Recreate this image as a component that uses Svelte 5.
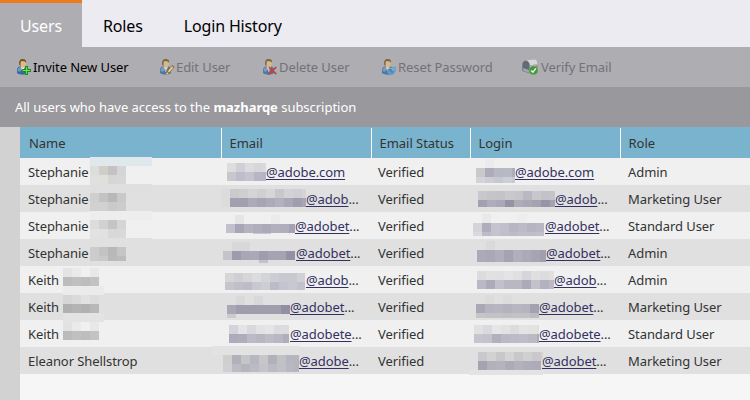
<script>
  const tabs = ['Users', 'Roles', 'Login History'];
  const actions = [
    { label: 'Invite New User', icon: 'add', w: 143 },
    { label: 'Edit User', icon: 'edit', w: 103 },
    { label: 'Delete User', icon: 'delete', w: 119 },
    { label: 'Reset Password', icon: 'reset', w: 142 },
    { label: 'Verify Email', icon: 'mail', w: 100 }
  ];
  const columns = ['Name', 'Email', 'Email Status', 'Login', 'Role'];

  // Mask band: [x, y, height, total width, colours of the 9px tiles]; "-" leaves a tile clear.
  // x and y count from the top left corner of the cell that holds the mask.
  const rows = [
    {
      name: 'Stephanie', status: 'Verified', role: 'Admin',
      nameMask: [[70, -1, 9, 62, 'e1e8eb e1e8eb e1e8eb e1e8eb e1e8eb e1e8eb e1e8eb'], [70, 8, 9, 36, 'dddddc cfcec7 c6c2c4 d4d5d7'], [70, 17, 9, 36, 'e0e0e0 dfdfdb d8d5d5 d6d7da']],
      email: { at: 45, text: '@adobe.com', mask: [[6, 5, 9, 39, 'dddddd cfcfd5 dcdcdf d7d7d9 dadadf'], [6, 14, 9, 39, 'c8c8cc bebdcb c4c4cc b8b6c4 b5b3c4']] },
      login: { at: 45, text: '@adobe.com', mask: [[15, 1, 9, 9, 'ebebeb'], [6, 10, 9, 39, 'c8c8cd acacba b8b8c3 b6bac5 adacbb'], [6, 19, 6, 39, 'd3d3d8 cdcdd5 c8c8d2 ccd0d6 c8c8d3']] }
    },
    {
      name: 'Stephanie', status: 'Verified', role: 'Marketing User',
      nameMask: [[70, -1, 9, 62, 'dfdfdf dfdfdf dfdfdf dfdfdf dfdfdf dfdfdf dfdfdf'], [70, 8, 9, 36, 'cfcfcf c3c3c3 b8b8b8 c9c9c9'], [70, 17, 9, 36, 'd1d1d1 d1d1d1 cacaca cccccc']],
      email: { at: 85, text: '@adob', mask: [[0, 4, 18, 9, 'dcdcdc'], [9, 4, 9, 76, 'cacacd ceced1 d4d4d5 cfcfd2 d6d6d7 c8c8cc d3d3d5 d0d0d2 d4d4d6'], [9, 13, 9, 76, 'a2a0b0 a2a0b0 acaab8 a7a5b3 acabb9 b3b1bd aaa8b6 9f9db0 a7a5b6']] },
      login: { at: 85, text: '@adob', mask: [[8, 6, 9, 77, 'c8c8cc c4c4c9 c3c3c8 c9c9cd c5c5ca b9b9c4 c8c8cc c2c2c8 c4c4ca'], [8, 15, 7, 77, 'a2a0b1 aeadba a9a8b6 9593a5 adacb9 a9a7b5 a5a3b2 9694a6 a4a2b2']] }
    },
    {
      name: 'Stephanie', status: 'Verified', role: 'Standard User',
      nameMask: [[70, -1, 9, 62, 'ededed ededed ededed ededed ededed ededed ededed'], [70, 8, 9, 36, 'dcdcdc d1d1d1 c4c4c4 d5d5d5'], [70, 17, 9, 36, 'e2e2e2 e1e1e1 d8d8d8 d9d9d9']],
      email: { at: 74, text: '@adobet', mask: [[14, 3, 9, 9, 'e5e5e8'], [50, 3, 9, 9, 'ebebec'], [5, 12, 9, 69, 'c1c0cc a8a6b6 b5b3c0 b0aebc abaab8 b2b0bd b0aebd a4a2b3'], [32, 21, 1, 18, 'c9c8d0 c9c8d0']] },
      login: { at: 75, text: '@adobet', mask: [[12, 2, 9, 9, 'e9e9ea'], [48, 2, 9, 9, 'ededee'], [3, 11, 9, 71, 'd4d4da b0aebd c5c4ce c0bfca b8b6c4 bbbac6 b5b4c1 b8b7c3'], [3, 20, 4, 71, 'd9d9de bdbbc9 c4c3ce c0becb bdbbc8 c0becb bebdc9 c0bfca']] }
    },
    {
      name: 'Stephanie', status: 'Verified', role: 'Admin',
      nameMask: [[70, -1, 9, 62, 'e0e0e0 e0e0e0 e0e0e0 e0e0e0 e0e0e0 e0e0e0 e0e0e0'], [70, 8, 9, 36, 'cccccc c3c3c3 b8b8b8 c5c5c5'], [70, 17, 5, 36, 'cccccc c9c9c9 b9b9b9 bcbcbc']],
      email: { at: 75, text: '@adobet', mask: [[11, 3, 9, 18, 'd8d8d9 d8d8d9'], [2, 12, 9, 72, 'c5c4cc 9e9bad a9a7b6 aba9b7 9f9cae a6a4b3 a5a3b1 9491a4'], [38, 21, 3, 9, 'c2c2c9']] },
      login: { at: 76, text: '@adobet', mask: [[16, 2, 9, 9, 'dadadb'], [7, 11, 12, 69, 'acaab8 aaa8b6 b0aebb a5a3b3 b0afbb abaab7 a7a5b4 a19fae']] }
    },
    {
      name: 'Keith', status: 'Verified', role: 'Admin',
      nameMask: [[43, 2, 9, 36, 'e4e4e4 eaeaea f0f0f0 e8e8e8'], [43, 11, 9, 36, 'bcbcbc c0c0c0 bdbdbd c2c2c2'], [43, 20, 9, 41, 'ebebeb ebebeb ebebeb ebebeb ebebeb']],
      email: { at: 85, text: '@adob', mask: [[4, 7, 9, 80, 'd6d6d9 d0d0d4 d6d6da dcdcdf d4d4d9 cdcdd5 c8c8d1 c8c8d1 d0d0d5'], [4, 16, 8, 80, 'c5c5cc c0c0cb bdbdca c8c8d0 cdcdd4 bcbcc9 c4c4ce c8c8d0 c2c2cc']] },
      login: { at: 84, text: '@adob', mask: [[7, 5, 9, 77, 'dcdcdf e1e1e2 e0e0e2 e4e4e6 e0e0e1 d5d5db dfdfe2 dcdcdf e0e0e1'], [7, 14, 9, 77, 'b9b8c5 adabba c2c1cb b8b7c3 b8b7c3 acaab9 c3c2cc b4b2c0 bab9c4']] }
    },
    {
      name: 'Keith', status: 'Verified', role: 'Marketing User',
      nameMask: [[43, 2, 9, 36, 'd6d6d6 dadada e1e1e1 dcdcdc'], [43, 11, 9, 36, 'b0b0b0 b4b4b4 b1b1b1 b8b8b8'], [43, 20, 9, 41, 'e3e3e3 e3e3e3 e3e3e3 e3e3e3 e3e3e3']],
      email: { at: 69, text: '@adobet', mask: [[15, 3, 9, 27, 'd9d9dc - d8d8da'], [6, 12, 9, 63, 'a9a8b5 a09ead a09ead a09ead a09ead a09ead 938fa3'], [6, 21, 4, 9, 'cbcbcd']] },
      login: { at: 69, text: '@adobet', mask: [[15, 2, 9, 27, 'dcdcdc - dcdcdc'], [6, 11, 9, 63, 'a9a8b7 b5b4bf b8b7c1 b3b2bd b8b7c1 b5b4bf a4a2b1'], [6, 20, 5, 63, 'c5c5c9 c1c1c6 c3c3c7 bfbfc5 c3c3c7 c1c1c6 bcbbc3']] }
    },
    {
      name: 'Keith', status: 'Verified', role: 'Standard User',
      nameMask: [[43, 2, 9, 36, 'e2e2e2 eaeaea f0f0f0 e8e8e8'], [43, 11, 9, 36, 'bbbbbb c0c0c0 bdbdbd c3c3c3']],
      email: { at: 69, text: '@adobete', mask: [[8, 5, 9, 60, 'd3d3da e4e4e6 d9d9dd e2e2e4 e5e5e7 dcdcdf dcdce0'], [8, 14, 9, 60, 'adabbb afadbd bbbac6 b7b6c2 bdbcc7 b8b7c3 b0aebd']] },
      login: { at: 69, text: '@adobete', mask: [[4, 5, 9, 65, 'e1e1e2 dadade e6e6e7 e2e2e3 dcdcdf e4e4e5 e2e2e3 e0e0e1'], [4, 14, 9, 65, 'c5c5d0 c3c2cd b1b0bf bab9c6 bcbbc7 bebdc9 babac5 aeacbc']] }
    },
    {
      name: 'Eleanor Shellstrop', status: 'Verified', role: 'Marketing User',
      nameMask: [],
      email: { at: 78, text: '@adobe', mask: [[-8, -1, 9, 86, 'e2e2e2 e2e2e2 e2e2e2 e2e2e2 e2e2e2 e2e2e2 e2e2e2 e2e2e2 e2e2e2 e2e2e2'], [2, 8, 9, 76, 'cfcfcf b1b1bc c5c5c9 b7b7c2 c7c7ca b1b1bc c1c1c6 b6b6c0 b5b5be'], [2, 17, 8, 76, 'd0d0d2 bcbcc5 b5b5bf bbbbc3 c3c3c9 bbbbc5 c0c0c7 b8b8c1 b4b4bd']] },
      login: { at: 72, text: '@adobet', mask: [[8, 5, 9, 65, 'c9c9cc d2d2d3 c8c8cb d4d4d5 c8c8cb d0d0d1 c9c9cb d2d2d3'], [8, 14, 9, 63, 'a5a3b1 b1b0bb b5b4be adabb8 b2b1bc afadb9 adabb8'], [-1, 23, 5, 74, 'e3e3e3 e3e3e3 e3e3e3 e3e3e3 e3e3e3 e3e3e3 e3e3e3 e3e3e3 e3e3e3']] }
    }
  ];
</script>

{#snippet mosaic(bands)}
  <svg class="mask" width="1" height="1" shape-rendering="crispEdges" aria-hidden="true">
    {#each bands as [x, y, h, w, tiles]}
      {#each tiles.split(' ') as c, i}
        {#if c !== '-'}
          <rect x={x + i * 9} {y} width={Math.min(9, w - i * 9)} height={h} fill={'#' + c} />
        {/if}
      {/each}
    {/each}
  </svg>
{/snippet}

{#snippet address(a)}
  <div class="cell">
    <span class="addr" style:padding-left="{a.at}px"><a href="#user">{a.text}</a>{#if a.text !== '@adobe.com'}...{/if}</span>
    {@render mosaic(a.mask)}
  </div>
{/snippet}

{#snippet icon(kind)}
  <svg class="icon" class:wide={kind === 'mail'} width="16" height="16" viewBox="0 0 16 16" aria-hidden="true">
    {#if kind === 'mail'}
      <path d="M.2 5.500C.2 2.500 2.500 1 4.500 1h8.500c2 0 2.800 1.500 2.800 4v6L7 14.500.2 12z" fill="#92979c" />
      <path d="M4 1.300 13 .6c2 .2 2.500 2 2.500 4.400L8 6.500C7.800 3.500 6.500 1.800 4 1.300z" fill="#d5d8da" />
      <path d="M.5 5.500C.5 3 2 2 3.800 2s3.700 1.700 3.700 4.500v7.600L.5 12z" fill="#626b73" />
      <path d="M1.200 9 7 11v2.800L1.200 12z" fill="#9aa7b1" />
      <path d="M7.700 6.700 15.600 5v4l-7.900 4z" fill="#b5babe" />
      <path d="M13.500 6.500h2v2h-2z" fill="#d65f60" />
      <circle cx="11.500" cy="11.300" r="4.400" fill="#439840" stroke="#72ad6b" stroke-width=".7" />
      <path d="m9.200 11.400 1.700 1.700 3-3.700" fill="none" stroke="#f0f6ef" stroke-width="1.400" />
    {:else}
      <g opacity={kind === 'add' ? 1 : 0.8}>
        <path d="M1 14.300V11c0-2.300 1.700-3.700 4-4h3c2.300.3 4 1.700 4 4v3.300c-3 1.800-8 1.800-11 0z" fill="#386b9b" />
        <path d="M1.500 11.200C2 9 3.200 8 5 8l1 3-3 2z" fill="#6a9bc4" />
        <path d="m4.700 7.600 2.100 5.600L9 7.500z" fill="#f1eee4" />
        <path d="m6.300 9.500 1 4 1-2.500z" fill="#c47a41" />
        <path d="M3.400 3.200C3.400 1.200 4.700.2 6.700.2s3.500 1 3.300 3.500c-.2 3-1.400 5-3.200 5S3.400 6.500 3.400 3.200z" fill="#e1bb82" />
        <path d="M3.200 5.700C2.600 2 4 .1 6.700.1c2.400 0 3.700 1 3.400 3.600L8.700 2.400 5.500 2 4.600 3.200v3.700z" fill="#725528" />
      </g>
      {#if kind === 'add'}
        <path d="M9.200 7h2.800v3.100h3v2.800h-3v3H9.200v-3h-3v-2.800h3z" fill="#178a17" />
        <path d="M10.100 8h1v3h3v1h-3v3h-1v-3h-3v-1h3z" fill="#78e662" />
      {:else if kind === 'edit'}
        <path d="m7.300 15.300 1-3.200 4.900-6 2.400 2-5 5.900z" fill="#8d7445" />
        <path d="m8.900 12.300 4-4.900 1.300 1-4.100 5z" fill="#efd880" />
        <path d="m12.700 6.700.8-.9 2.200 1.900-.8.800z" fill="#bf7166" />
        <path d="m7.200 15.500.8-2.300 1.400 1.200z" fill="#ede4c8" />
      {:else if kind === 'delete'}
        <path d="m6.900 8.200 7.400 6.900M14.300 8.200l-7.900 7.200" fill="none" stroke="#bd4545" stroke-width="1.700" />
      {:else}
        <path d="M6.800 11.300c.4-2.500 3.500-3.800 5.700-2.200L14.200 8v4H9.900l1.200-1.200c-1.500-.9-2.400-.4-4.300.5z" fill="#79b3df" stroke="#4686bb" stroke-width=".6" />
        <path d="M13.800 12.500c-.5 2.600-3.600 3.700-5.800 2.100l-1.500 1.200v-4h4.200L9.500 13c1.600.8 2.500.2 4.300-.5z" fill="#65a2d3" stroke="#4686bb" stroke-width=".6" />
      {/if}
    {/if}
  </svg>
{/snippet}

<main>
  <nav>
    {#each tabs as tab, i}
      <div class="tab" class:active={i === 0}>{tab}</div>
    {/each}
  </nav>
  <div class="toolbar">
    {#each actions as a, i}
      <div class="action" class:enabled={i === 0} style:width="{a.w}px">{@render icon(a.icon)}<span>{a.label}</span></div>
    {/each}
  </div>
  <div class="notice"><span>All users who have access to the <b>mazharqe</b> subscription</span></div>
  <section>
    <div class="row head">
      {#each columns as c}<div class="cell">{c}</div>{/each}
    </div>
    {#each rows as r}
      <div class="row">
        <div class="cell">{r.name}{@render mosaic(r.nameMask)}</div>
        {@render address(r.email)}
        <div class="cell">{r.status}</div>
        {@render address(r.login)}
        <div class="cell">{r.role}</div>
      </div>
    {/each}
  </section>
</main>

<style>
  :global(body) { margin: 0; }
  main {
    width: 750px; height: 400px; overflow: hidden;
    display: flex; flex-direction: column;
    background: #d2d2d2; color: #333;
    font: 13px/18px "Noto Sans", "Open Sans", sans-serif;
    letter-spacing: -0.03px;
  }
  nav { display: flex; height: 47px; flex: none; background: #ecebf1; }
  .tab {
    box-sizing: border-box; padding: 5px 20px 0 21px; line-height: 36px; letter-spacing: -0.15px;
    border-top: 3px solid transparent; font-size: 16px; color: #000;
  }
  .tab.active { width: 82px; padding-left: 20px; background: #aeadb2; border-color: #eb7b1c; color: #fff; }
  .toolbar { display: flex; height: 40px; flex: none; box-sizing: border-box; padding-left: 16px; background: #aeadb2; }
  .action { display: flex; align-items: center; flex: none; gap: 1px; color: #737277; white-space: nowrap; letter-spacing: -0.08px; }
  .action.enabled { color: #000; }
  .icon { flex: none; }
  .icon.wide { margin: 0 2px 0 -1px; }
  .notice { display: flex; align-items: center; height: 40px; flex: none; padding-left: 15px; background: #99989d; color: #fff; }
  section { flex: 1; margin-left: 20px; background: #f6f6f6; }
  .row { display: grid; grid-template-columns: 201px 150px 99px 150px 1fr; height: 27px; line-height: 28px; background: #f0f0f0; }
  .row:nth-child(odd) { background: #e0e0e0; }
  .row.head { box-sizing: border-box; height: 31px; padding-top: 1px; line-height: 30px; background: #7ab3cd; }
  .cell { position: relative; padding-left: 8px; white-space: nowrap; letter-spacing: -0.08px; }
  .cell:nth-child(3) { padding-left: 7px; }
  .head .cell { padding-left: 9px; letter-spacing: -0.03px; }
  .head .cell + .cell { padding-left: 7.500px; border-left: 1px solid #fff; }
  .cell:has(.addr) { padding-left: 0; }
  .addr a { color: #34305f; text-decoration: underline; text-underline-offset: 2px; }
  .mask { position: absolute; left: 0; top: 0; overflow: visible; }
</style>
